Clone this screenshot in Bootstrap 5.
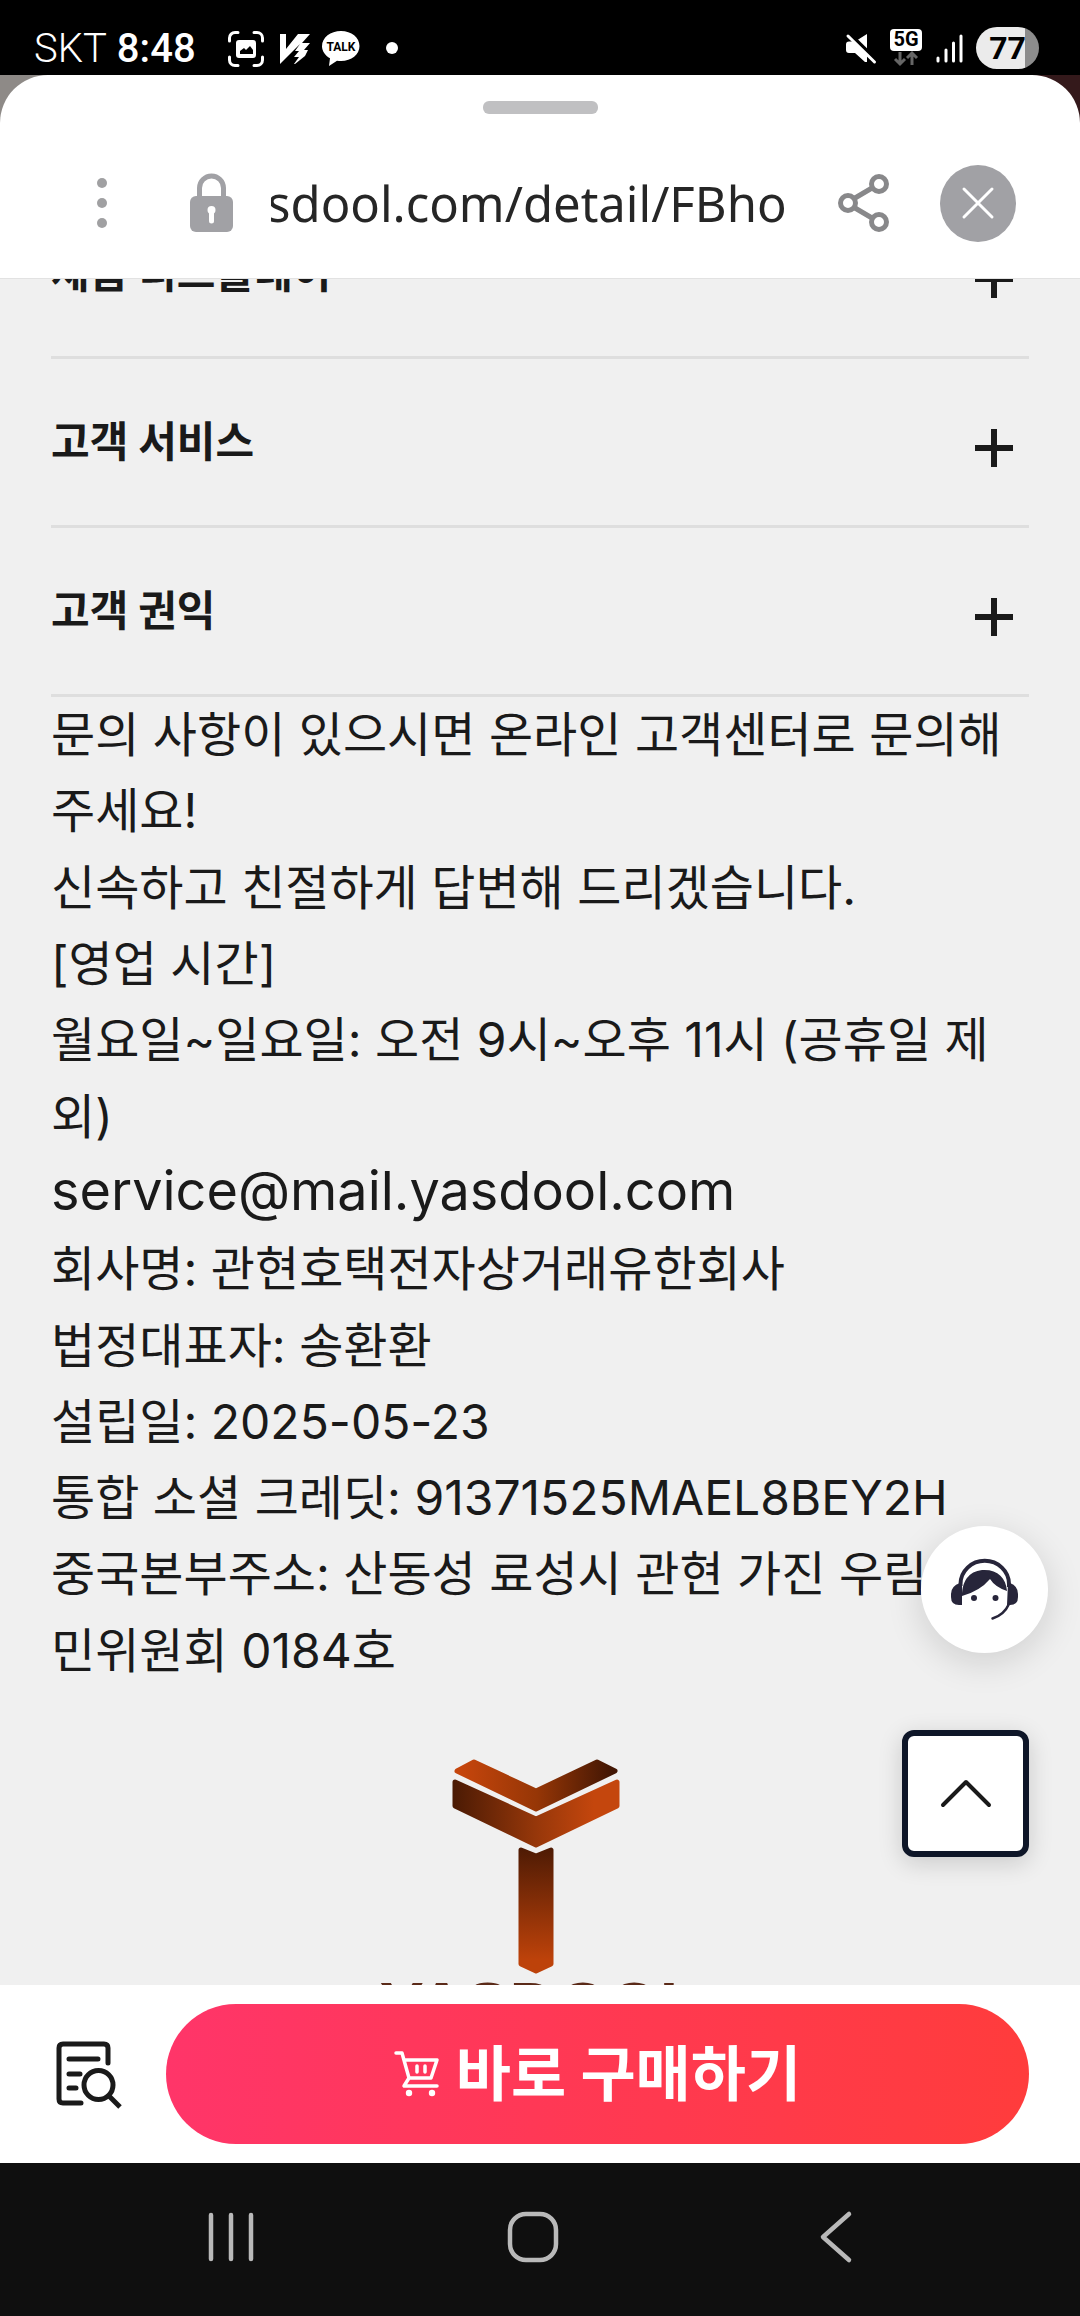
<!DOCTYPE html>
<html lang="ko">
<head>
<meta charset="utf-8">
<meta name="viewport" content="width=device-width, initial-scale=1">
<title>YASDOOL</title>
<link href="https://cdn.jsdelivr.net/npm/bootstrap@5.3.0/dist/css/bootstrap.min.css" rel="stylesheet">
<style>
  body { font-family: Inter, "Noto Sans CJK KR", sans-serif; color: #1a1a1a; background: #0f0f0f; }
  svg { display: block; flex: none; overflow: visible; }
  .status-bar { height: 75px; padding: 19px 41px 0 34px; font-family: Roboto, sans-serif; font-size: 40px; line-height: 60px; }
  .status-left { gap: 10px; }
  .notices { margin: 12px 0 0 22px; gap: 16px; }
  .signals { margin-top: 8px; gap: 13px; }
  .carrier { font-weight: 300; }
  .battery { width: 63px; height: 42px; border-radius: 21px; background: linear-gradient(90deg, #ebebeb 78%, #8c8c8c 78%); color: #000; font-size: 32px; line-height: 42px; font-weight: 700; }
  .backdrop-strip { background: linear-gradient(90deg, #8e8a87 50%, #34191b 50%); }
  .sheet-head { background: #fff; border-radius: 48px 48px 0 0; border-bottom: 1px solid #e2e2e2; padding: 26px 0 36px 0; }
  .grab { width: 115px; height: 13px; border-radius: 6px; background: #c0c0c2; }
  .url-row { padding: 50px 64px 0 96px; }
  .url-text { font-family: "Noto Sans", sans-serif; font-size: 49px; line-height: 78px; color: #262626; margin: 0 51px 0 38px; }
  .plain-btn { border: 0; background: transparent; padding: 0; color: inherit; }
  .lock { margin-left: 82px; }
  .close-btn { width: 77px; height: 77px; background: #a1a1a5; margin-left: 51px; }
  .page-view { background: #f0f0f0; }
  .page-body { padding: 0 51px; }
  .fold-list { margin-top: -89px; }
  .fold-row { height: 169px; border-bottom: 3px solid #dedede; font-size: 42px; font-weight: 700; line-height: 60px; padding-right: 16px; }
  .fold-row svg { margin-top: 12px; }
  .info { font-size: 48px; line-height: 1.59; }
  .mail { font-size: 54px; line-height: 1; color: inherit; }
  .brand { margin-top: 69px; }
  .brand-name { font-family: "Liberation Sans", sans-serif; font-weight: 700; font-size: 66px; line-height: 66px; color: #5a2a18; }
  .chat-btn { width: 127px; height: 127px; right: 32px; bottom: 332px; background: #fff; box-shadow: 0 9px 36px rgba(0,0,0,.14); }
  .top-btn { width: 127px; height: 127px; right: 51px; bottom: 128px; background: #fff; border: 6px solid #0e1628; border-radius: 12px; box-shadow: 0 6px 24px rgba(0,0,0,.16); }
  .buy-bar { background: #fff; padding: 19px 51px; gap: 40px; }
  .buy-btn { height: 140px; color: #fff; font-size: 60px; font-weight: 700; background: linear-gradient(90deg, #ff3569, #ff3c3c); gap: 16px; }
  .sys-nav { height: 153px; background: #0f0f0f; padding: 0 93px 6px 80px; }
</style>
<script src="https://cdn.jsdelivr.net/npm/bootstrap@5.3.0/dist/js/bootstrap.bundle.min.js"></script>
</head>
<body class="vh-100 d-flex flex-column overflow-hidden">

<div class="status-bar bg-black text-white d-flex justify-content-between align-items-start flex-shrink-0">
  <div class="status-left d-flex">
    <span class="carrier">SKT</span><span class="fw-medium">8:48</span>
    <div class="notices d-flex">
      <svg width="36" height="36" viewBox="0 0 36 36" fill="none" aria-hidden="true">
        <path d="M1.500 10V7A5.500 5.500 0 0 1 7 1.500h3M26 1.500h3A5.500 5.500 0 0 1 34.500 7v3M34.500 26v3a5.500 5.500 0 0 1-5.500 5.500h-3M10 34.500H7A5.500 5.500 0 0 1 1.500 29v-3" stroke="#fff" stroke-width="3" stroke-linecap="round"/>
        <rect x="8" y="9" width="20" height="18" rx="3" fill="#fff"/>
        <path d="M12 23v-3l4-3 2 2 4-4 3 4v4z" fill="#000"/>
      </svg>
      <svg width="26" height="36" viewBox="0 0 26 36" fill="#fff" aria-hidden="true">
        <path d="M0 3h6v15L18 3h12l-8 9h8l-6 7h4l-3 6-10 8h-1l5-7h-5l5-6h-4l5-7L0 33z"/>
      </svg>
      <svg width="38" height="36" viewBox="0 0 38 36" aria-hidden="true">
        <path d="M19 0C8.500 0 0 6.500 0 15.200c0 5 3.200 9.300 8 12L7 35l8-5.200c1.300.2 2.600.3 4 .3 10.500 0 18.500-6.400 18.500-15S29.500 0 19 0z" fill="#fff"/>
        <text x="19" y="20" text-anchor="middle" font-family="Roboto, sans-serif" font-weight="700" font-size="12" fill="#000">TALK</text>
      </svg>
      <svg width="36" height="36" viewBox="0 0 36 36" aria-hidden="true"><circle cx="16" cy="17" r="6" fill="#fff"/></svg>
    </div>
  </div>
  <div class="signals d-flex">
    <svg width="30" height="42" viewBox="0 0 30 42" aria-hidden="true">
      <path d="M0 17.500q0-3 3-3h6L21 7v28h-2L9 26H3q-3 0-3-3z" fill="#fff"/>
      <path d="M3.500 7L31 34" stroke="#000" stroke-width="4"/>
      <path d="M2 9l26.500 26" stroke="#fff" stroke-width="3" stroke-linecap="round"/>
    </svg>
    <svg width="34" height="42" viewBox="0 0 34 42" aria-hidden="true">
      <rect x="1" y="2" width="32" height="22" rx="4" fill="#fff"/>
      <text x="17" y="19" text-anchor="middle" font-family="Roboto, sans-serif" font-weight="700" font-size="20" fill="#000">5G</text>
      <path d="M11 25v12M6 32l5 5 5-5M23 38V26M18 31l5-5 5 5" fill="none" stroke="#666" stroke-width="3"/>
    </svg>
    <svg width="27" height="42" viewBox="0 0 27 42" stroke="#fff" stroke-width="3" stroke-linecap="round" aria-hidden="true">
      <path d="M2 31v3M10 23v11M17.500 16v18M25 9v25"/>
    </svg>
    <span class="battery text-center">77</span>
  </div>
</div>

<header class="backdrop-strip flex-shrink-0">
  <div class="sheet-head">
    <div class="grab mx-auto"></div>
    <div class="url-row d-flex align-items-center">
      <button type="button" class="plain-btn" aria-label="메뉴">
        <svg width="12" height="52" viewBox="0 0 12 52" fill="#a0a0a2"><circle cx="6" cy="6" r="5"/><circle cx="6" cy="26" r="5"/><circle cx="6" cy="46" r="5"/></svg>
      </button>
      <svg class="lock" width="43" height="60" viewBox="0 0 43 60" aria-label="보안 연결" role="img">
        <path d="M9.500 27V15a12 12 0 0 1 24 0v12" fill="none" stroke="#a1a1a5" stroke-width="5"/>
        <rect y="23" width="43" height="36" rx="6" fill="#a1a1a5"/>
        <path d="M21.500 37v11" stroke="#fff" stroke-width="5" stroke-linecap="round"/><circle cx="21.500" cy="37" r="4" fill="#fff"/>
      </svg>
      <div class="url-text flex-fill overflow-hidden text-nowrap d-flex justify-content-end"><span>sdool.com/detail/FBho</span></div>
      <button type="button" class="plain-btn" aria-label="공유">
        <svg width="51" height="58" viewBox="0 0 51 58" fill="none" stroke="#88888a" stroke-width="5"><path d="M17 24L34 14M17 34l17 10"/><circle cx="10" cy="29" r="7.500"/><circle cx="41" cy="10" r="7.500"/><circle cx="41" cy="48" r="7.500"/></svg>
      </button>
      <button type="button" class="plain-btn close-btn rounded-circle d-flex align-items-center justify-content-center" aria-label="닫기">
        <svg width="32" height="32" viewBox="0 0 32 32" stroke="#fff" stroke-width="3" stroke-linecap="round"><path d="M2 2l28 28M30 2L2 30"/></svg>
      </button>
    </div>
  </div>
</header>

<div class="page-view position-relative flex-fill overflow-hidden">
  <main class="page-body">
    <div class="fold-list">
      <button type="button" class="plain-btn fold-row w-100 d-flex align-items-center justify-content-between"><span>제품 디스플레이</span>
        <svg width="38" height="38" viewBox="0 0 38 38" stroke="#1a1a1a" stroke-width="6" aria-hidden="true"><path d="M0 19h38M19 0v38"/></svg></button>
      <button type="button" class="plain-btn fold-row w-100 d-flex align-items-center justify-content-between"><span>고객 서비스</span>
        <svg width="38" height="38" viewBox="0 0 38 38" stroke="#1a1a1a" stroke-width="6" aria-hidden="true"><path d="M0 19h38M19 0v38"/></svg></button>
      <button type="button" class="plain-btn fold-row w-100 d-flex align-items-center justify-content-between"><span>고객 권익</span>
        <svg width="38" height="38" viewBox="0 0 38 38" stroke="#1a1a1a" stroke-width="6" aria-hidden="true"><path d="M0 19h38M19 0v38"/></svg></button>
    </div>
    <div class="info">
      <div>문의 사항이 있으시면 온라인 고객센터로 문의해주세요!</div>
      <div>신속하고 친절하게 답변해 드리겠습니다.</div>
      <div>[영업 시간]</div>
      <div>월요일~일요일: 오전 9시~오후 11시 (공휴일 제외)</div>
      <div><a class="mail text-decoration-none" href="mailto:service@mail.yasdool.com">service@mail.yasdool.com</a></div>
      <div>회사명: 관현호택전자상거래유한회사</div>
      <div>법정대표자: 송환환</div>
      <div>설립일: 2025-05-23</div>
      <div>통합 소셜 크레딧: 91371525MAEL8BEY2H</div>
      <div>중국본부주소: 산동성 료성시 관현 가진 우림부락민위원회 0184호</div>
    </div>
    <div class="brand d-flex flex-column align-items-center">
      <svg width="186" height="215" viewBox="0 0 186 215" stroke-linejoin="round" stroke-width="5" aria-hidden="true">
        <defs>
          <linearGradient id="roof" gradientUnits="userSpaceOnUse" x1="15" y1="0" x2="165" y2="0"><stop offset="0" stop-color="#c5450c"/><stop offset=".5" stop-color="#963606"/><stop offset="1" stop-color="#421604"/></linearGradient>
          <linearGradient id="wing" gradientUnits="userSpaceOnUse" x1="5" y1="0" x2="172" y2="0"><stop offset="0" stop-color="#4a1a04"/><stop offset=".5" stop-color="#96370a"/><stop offset=".85" stop-color="#c4460d"/></linearGradient>
          <linearGradient id="post" gradientUnits="userSpaceOnUse" x1="0" y1="88" x2="0" y2="214"><stop offset="0" stop-color="#4c1a04"/><stop offset=".9" stop-color="#bd420a"/></linearGradient>
        </defs>
        <path d="M10 13L27 4 89 33 150 4 168 13 89 51z" fill="url(#roof)" stroke="url(#roof)"/>
        <path d="M8 24L89 61 170 24V48L89 87 8 48z" fill="url(#wing)" stroke="url(#wing)"/>
        <path d="M74 92l15 6 15-6V206l-15 7-15-7z" fill="url(#post)" stroke="url(#post)"/>
      </svg>
      <div class="brand-name">YASDOOL</div>
    </div>
  </main>

  <button type="button" class="plain-btn chat-btn position-absolute rounded-circle d-flex align-items-center justify-content-center" aria-label="고객센터">
    <svg width="68" height="62" viewBox="0 0 68 62" aria-hidden="true">
      <path d="M9.500 27V25a24 23 0 0 1 48.500 0v3" fill="none" stroke="#27253a" stroke-width="4"/>
      <path d="M11 24h-2Q0 27 0 35v3q0 8 8 8h3zM57 24h2q8 3 8 11v3q0 8-8 8h-3z" fill="#27253a"/>
      <path d="M11 37C11 20 20 11 33.500 11S55 19 56 32Q44 28 39 20 29 32 11 37z" fill="#27253a"/>
      <circle cx="23" cy="39" r="3" fill="#27253a"/><circle cx="44.500" cy="39" r="3" fill="#27253a"/>
      <path d="M58 45Q53 56 41.500 59.500" fill="none" stroke="#27253a" stroke-width="2.500" stroke-linecap="round"/>
    </svg>
  </button>
  <button type="button" class="plain-btn top-btn position-absolute d-flex align-items-center justify-content-center" aria-label="맨 위로">
    <svg width="52" height="28" viewBox="0 0 52 28" fill="none" stroke="#1a1a1a" stroke-width="4" stroke-linecap="round" stroke-linejoin="round" aria-hidden="true"><path d="M3 25L26 2l23 23"/></svg>
  </button>
</div>

<div class="buy-bar d-flex align-items-center flex-shrink-0">
  <button type="button" class="plain-btn" aria-label="주문 조회">
    <svg width="75" height="68" viewBox="0 0 75 68" fill="none" stroke="#1a1a1a" stroke-width="5" stroke-linecap="round" aria-hidden="true">
      <path d="M57 23V8q0-4-4-4H12Q8 4 8 8v51q0 4 4 4h18"/>
      <path d="M18 19h29M18 34h11M18 48h7"/>
      <circle cx="47.500" cy="45" r="14.500"/><path d="M58 56l11 11" stroke-linecap="butt"/>
    </svg>
  </button>
  <button type="button" class="plain-btn buy-btn rounded-pill flex-fill d-flex align-items-center justify-content-center">
    <svg width="46" height="46" viewBox="0 0 46 46" fill="none" stroke="#fff" stroke-width="3.500" stroke-linecap="round" stroke-linejoin="round" aria-hidden="true">
      <path d="M2 2h6l7 25h22l6-18H10M15 27l-5 8h33"/><path d="M23 15v6M31 15v6"/>
      <g fill="#fff" stroke="none"><circle cx="15" cy="42" r="3.200"/><circle cx="38" cy="42" r="3.200"/></g>
    </svg>
    <span>바로 구매하기</span>
  </button>
</div>

<nav class="sys-nav d-flex align-items-center flex-shrink-0" aria-label="시스템">
  <div class="row g-0 w-100">
    <div class="col d-flex justify-content-center"><button type="button" class="plain-btn" aria-label="최근 앱">
      <svg width="46" height="52" viewBox="0 0 46 52" stroke="#b9b9b9" stroke-width="4.500" stroke-linecap="round"><path d="M3 4v44M23 4v44M43 4v44"/></svg></button></div>
    <div class="col d-flex justify-content-center"><button type="button" class="plain-btn" aria-label="홈">
      <svg width="54" height="54" viewBox="0 0 54 54" fill="none" stroke="#b9b9b9" stroke-width="4.500"><rect x="4" y="4" width="46" height="46" rx="16"/></svg></button></div>
    <div class="col d-flex justify-content-center"><button type="button" class="plain-btn" aria-label="뒤로">
      <svg width="34" height="54" viewBox="0 0 34 54" fill="none" stroke="#b9b9b9" stroke-width="4.500" stroke-linecap="round" stroke-linejoin="round"><path d="M30 4L4 27l26 23"/></svg></button></div>
  </div>
</nav>
</body>
</html>
